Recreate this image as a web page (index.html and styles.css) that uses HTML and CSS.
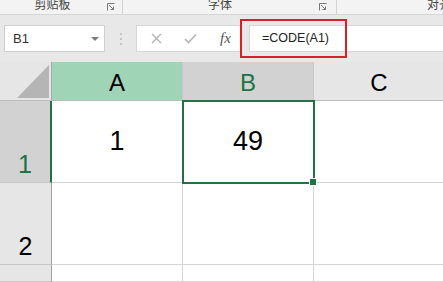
FILE: index.html
```html
<!DOCTYPE html>
<html lang="zh-CN">
<head>
  <meta charset="UTF-8" />
  <meta name="viewport" content="width=device-width, initial-scale=1.0" />
  <title>CODE 函数</title>
  <link rel="stylesheet" href="styles.css">
</head>
<body>
  <div class="ribbon">
    <div class="group group-clip">
      <span class="group-label">剪贴板</span>
      <svg class="launcher" width="8" height="8" viewBox="0 0 8 8"><path d="M0.5 7.5V0.5H7.5M2 2L6.5 6.5M3.5 6.5H6.5V3.5" fill="none" stroke="#777" stroke-width="1"/></svg>
    </div>
    <div class="group group-font">
      <span class="group-label">字体</span>
      <svg class="launcher" width="8" height="8" viewBox="0 0 8 8"><path d="M0.5 7.5V0.5H7.5M2 2L6.5 6.5M3.5 6.5H6.5V3.5" fill="none" stroke="#777" stroke-width="1"/></svg>
    </div>
    <div class="group group-align">
      <span class="group-label">对齐方式</span>
    </div>
  </div>

  <div class="formula-bar">
    <div class="name-box">
      <span>B1</span>
      <span class="caret"></span>
    </div>
    <div class="grip">
      <svg width="2" height="12" viewBox="0 0 2 12"><rect y="0" width="2" height="2" fill="#c4c4c4"/><rect y="5" width="2" height="2" fill="#c4c4c4"/><rect y="10" width="2" height="2" fill="#c4c4c4"/></svg>
    </div>
    <div class="fx-tools">
      <svg width="11" height="11" viewBox="0 0 11 11"><path d="M1 1L10 10M10 1L1 10" stroke="#b3b3b3" stroke-width="1.4"/></svg>
      <svg width="13" height="11" viewBox="0 0 13 11"><path d="M1 6L4.5 9.5L12 1.5" fill="none" stroke="#b3b3b3" stroke-width="1.6"/></svg>
      <span class="fx">fx</span>
    </div>
    <div class="fx-input">=CODE(A1)</div>
    <div class="highlight"></div>
  </div>

  <div class="sheet">
    <div class="corner"><span class="corner-mark"></span></div>
    <div class="col-head col-a">A</div>
    <div class="col-head col-b">B</div>
    <div class="col-head">C</div>

    <div class="row-head row-sel">1</div>
    <div class="cell">1</div>
    <div class="cell active">49</div>
    <div class="cell"></div>

    <div class="row-head">2</div>
    <div class="cell"></div>
    <div class="cell"></div>
    <div class="cell"></div>

    <div class="row-head"></div>
    <div class="cell"></div>
    <div class="cell"></div>
    <div class="cell"></div>
  </div>
</body>
</html>
```

FILE: styles.css
```css
body {
  margin: 0;
  width: 443px;
  height: 282px;
  overflow: hidden;
  font-family: "Liberation Sans", "Noto Sans CJK SC", sans-serif;
  background: #e8e8e8;
  color: #000;
}
.ribbon {
  display: flex;
  height: 14px;
  overflow: hidden;
  background: #f3f3f3;
  border-bottom: 1px solid #d6d6d6;
}
.group {
  display: flex;
  flex-shrink: 0;
  align-items: flex-start;
  border-right: 1px solid #d2d2d2;
  box-sizing: border-box;
}
.group-clip {
  width: 123px;
}
.group-font {
  width: 214px;
}
.group-align {
  flex: 1 0 auto;
  border-right: none;
  padding-left: 90px;
  white-space: nowrap;
}
.group-label {
  font-family: "Noto Sans CJK SC", sans-serif;
  font-size: 12px;
  line-height: 13px;
  margin-top: -3px;
  color: #444;
  white-space: nowrap;
}
.group-clip .group-label {
  width: 105px;
  text-align: center;
}
.group-font .group-label {
  width: 194px;
  text-align: center;
}
.launcher {
  margin-top: 3px;
  margin-left: 2px;
}
.formula-bar {
  position: relative;
  display: flex;
  height: 47px;
  padding-top: 10px;
  box-sizing: border-box;
}
.name-box {
  display: flex;
  align-items: center;
  justify-content: space-between;
  width: 101px;
  height: 27px;
  margin-left: 4px;
  padding: 0 5px 0 8px;
  box-sizing: border-box;
  background: #fff;
  border: 1px solid #cfcfcf;
  font-size: 13px;
  color: #333;
}
.caret {
  width: 0;
  height: 0;
  border-left: 4px solid transparent;
  border-right: 4px solid transparent;
  border-top: 4px solid #7a7a7a;
}
.grip {
  display: flex;
  align-items: center;
  justify-content: center;
  width: 31px;
  height: 27px;
}
.fx-tools {
  display: flex;
  align-items: center;
  gap: 22px;
  width: 104px;
  height: 27px;
  padding-left: 14px;
  box-sizing: border-box;
  background: #fff;
  border: 1px solid #d6d6d6;
  border-right: none;
}
.fx {
  font-family: "Liberation Serif", serif;
  font-style: italic;
  font-size: 15px;
  color: #555;
  margin-left: 1px;
}
.fx-input {
  flex: 1;
  height: 27px;
  margin-left: 9px;
  padding-left: 12px;
  box-sizing: border-box;
  background: #fff;
  border: 1px solid #d6d6d6;
  border-right: none;
  font-size: 12.5px;
  line-height: 25px;
  color: #222;
}
.highlight {
  position: absolute;
  left: 240px;
  top: 4px;
  width: 107px;
  height: 39px;
  box-sizing: border-box;
  border: 2px solid #d4222b;
}
.sheet {
  display: grid;
  grid-template-columns: 52px 131px 131px 131px;
  grid-template-rows: 39px 82px 82px 17px;
  background: #fff;
}
.sheet > div {
  box-sizing: border-box;
  border-right: 1px solid #d4d4d4;
  border-bottom: 1px solid #d4d4d4;
}
.corner {
  position: relative;
  background: #e6e6e6;
  border-right-color: #a8a8a8 !important;
  border-bottom-color: #bdbdbd !important;
}
.corner-mark {
  position: absolute;
  right: 2px;
  bottom: 2px;
  width: 0;
  height: 0;
  border-left: 32px solid transparent;
  border-bottom: 33px solid #b5b5b5;
}
.col-head {
  display: flex;
  justify-content: center;
  align-items: center;
  padding-top: 4px;
  background: #e6e6e6;
  font-size: 24px;
  border-right-color: #c8c8c8 !important;
  border-bottom-color: #bdbdbd !important;
}
.col-a {
  background: #9fd5b6;
}
.col-b {
  background: #d2d2d2;
  color: #217346;
}
.row-head {
  display: flex;
  justify-content: center;
  align-items: flex-end;
  padding-bottom: 5px;
  background: #e6e6e6;
  font-size: 25px;
  line-height: 25px;
  border-right-color: #a0a0a0 !important;
  border-bottom-color: #c6c6c6 !important;
}
.row-sel {
  background: #d2d2d2;
  color: #217346;
  border-right: 2px solid #217346 !important;
}
.cell {
  display: flex;
  justify-content: center;
  align-items: center;
  font-size: 27px;
}
.active {
  position: relative;
  outline: 2px solid #217346;
  outline-offset: -1px;
}
.active::after {
  content: "";
  position: absolute;
  right: -4px;
  bottom: -4px;
  width: 6px;
  height: 6px;
  background: #217346;
  border: 1px solid #fff;
}
```
